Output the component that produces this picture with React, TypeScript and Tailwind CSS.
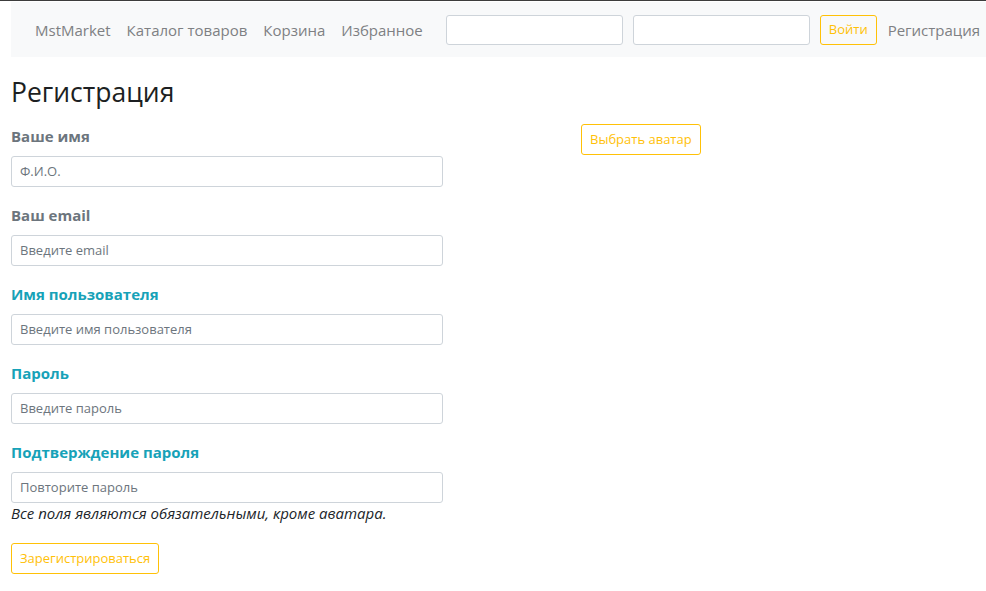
const font = { fontFamily: '"Open Sans", "Noto Sans", sans-serif' };

const fields = [
  { label: "Ваше имя", placeholder: "Ф.И.О.", tone: "text-[#6c757d]" },
  { label: "Ваш email", placeholder: "Введите email", tone: "text-[#6c757d]" },
  { label: "Имя пользователя", placeholder: "Введите имя пользователя", tone: "text-[#17a2b8]" },
  { label: "Пароль", placeholder: "Введите пароль", tone: "text-[#17a2b8]" },
  { label: "Подтверждение пароля", placeholder: "Повторите пароль", tone: "text-[#17a2b8]" },
];

const navLinks = ["MstMarket", "Каталог товаров", "Корзина", "Избранное"];

export default function App() {
  return (
    <div className="min-h-[591px] bg-white border-t border-[#3c3c3c] text-[#212529]" style={font}>
      {/* Navbar */}
      <nav className="ml-[11px] mt-px h-[55px] bg-[#f8f9fa] flex items-center pl-[16px]">
        <ul className="flex items-center">
          {navLinks.map((l) => (
            <li key={l}>
              <a className="block px-2 whitespace-nowrap text-[15px] leading-6 text-[#7e8083]">{l}</a>
            </li>
          ))}
        </ul>
        <form className="flex items-center ml-[15px]">
          <input className="w-[177px] h-[30px] border border-[#ced4da] rounded-[3px] bg-white" />
          <input className="ml-[10px] w-[177px] h-[30px] border border-[#ced4da] rounded-[3px] bg-white" />
          <button
            type="button"
            className="ml-[10px] h-[30px] px-2 border border-[#ffc107] rounded-[3px] text-[#ffc107] text-[13px]"
          >
            Войти
          </button>
        </form>
        <a className="ml-[11px] whitespace-nowrap text-[15px] leading-6 text-[#7e8083]">Регистрация</a>
      </nav>

      {/* Content */}
      <main className="pl-[11px] pt-[20px]">
        <h3 className="text-[26.5px] leading-[1.2] font-medium text-[#1c1f22] mb-[15px]">Регистрация</h3>
        <div className="flex">
          <form className="w-[432px]">
            {fields.map((f, i) => (
              <div key={f.label} className={i < fields.length - 1 ? "mb-[16px]" : ""}>
                <label className={`block text-[15px] leading-6 font-bold mb-[8px] ${f.tone}`}>{f.label}</label>
                <input
                  placeholder={f.placeholder}
                  className="w-full h-[31px] px-[8px] border border-[#ced4da] rounded-[3px] text-[13px] placeholder:text-[#6c757d] outline-none"
                />
              </div>
            ))}
            <p className="text-[15px] leading-[21px] italic text-[#212529]">
              Все поля являются обязательными, кроме аватара.
            </p>
            <button
              type="button"
              className="mt-[19px] h-[31px] px-[8px] border border-[#ffc107] rounded-[3px] text-[#ffc107] text-[13px]"
            >
              Зарегистрироваться
            </button>
          </form>
          <div className="ml-[138px]">
            <button
              type="button"
              className="h-[31px] px-[8px] border border-[#ffc107] rounded-[3px] text-[#ffc107] text-[13px]"
            >
              Выбрать аватар
            </button>
          </div>
        </div>
      </main>
    </div>
  );
}
